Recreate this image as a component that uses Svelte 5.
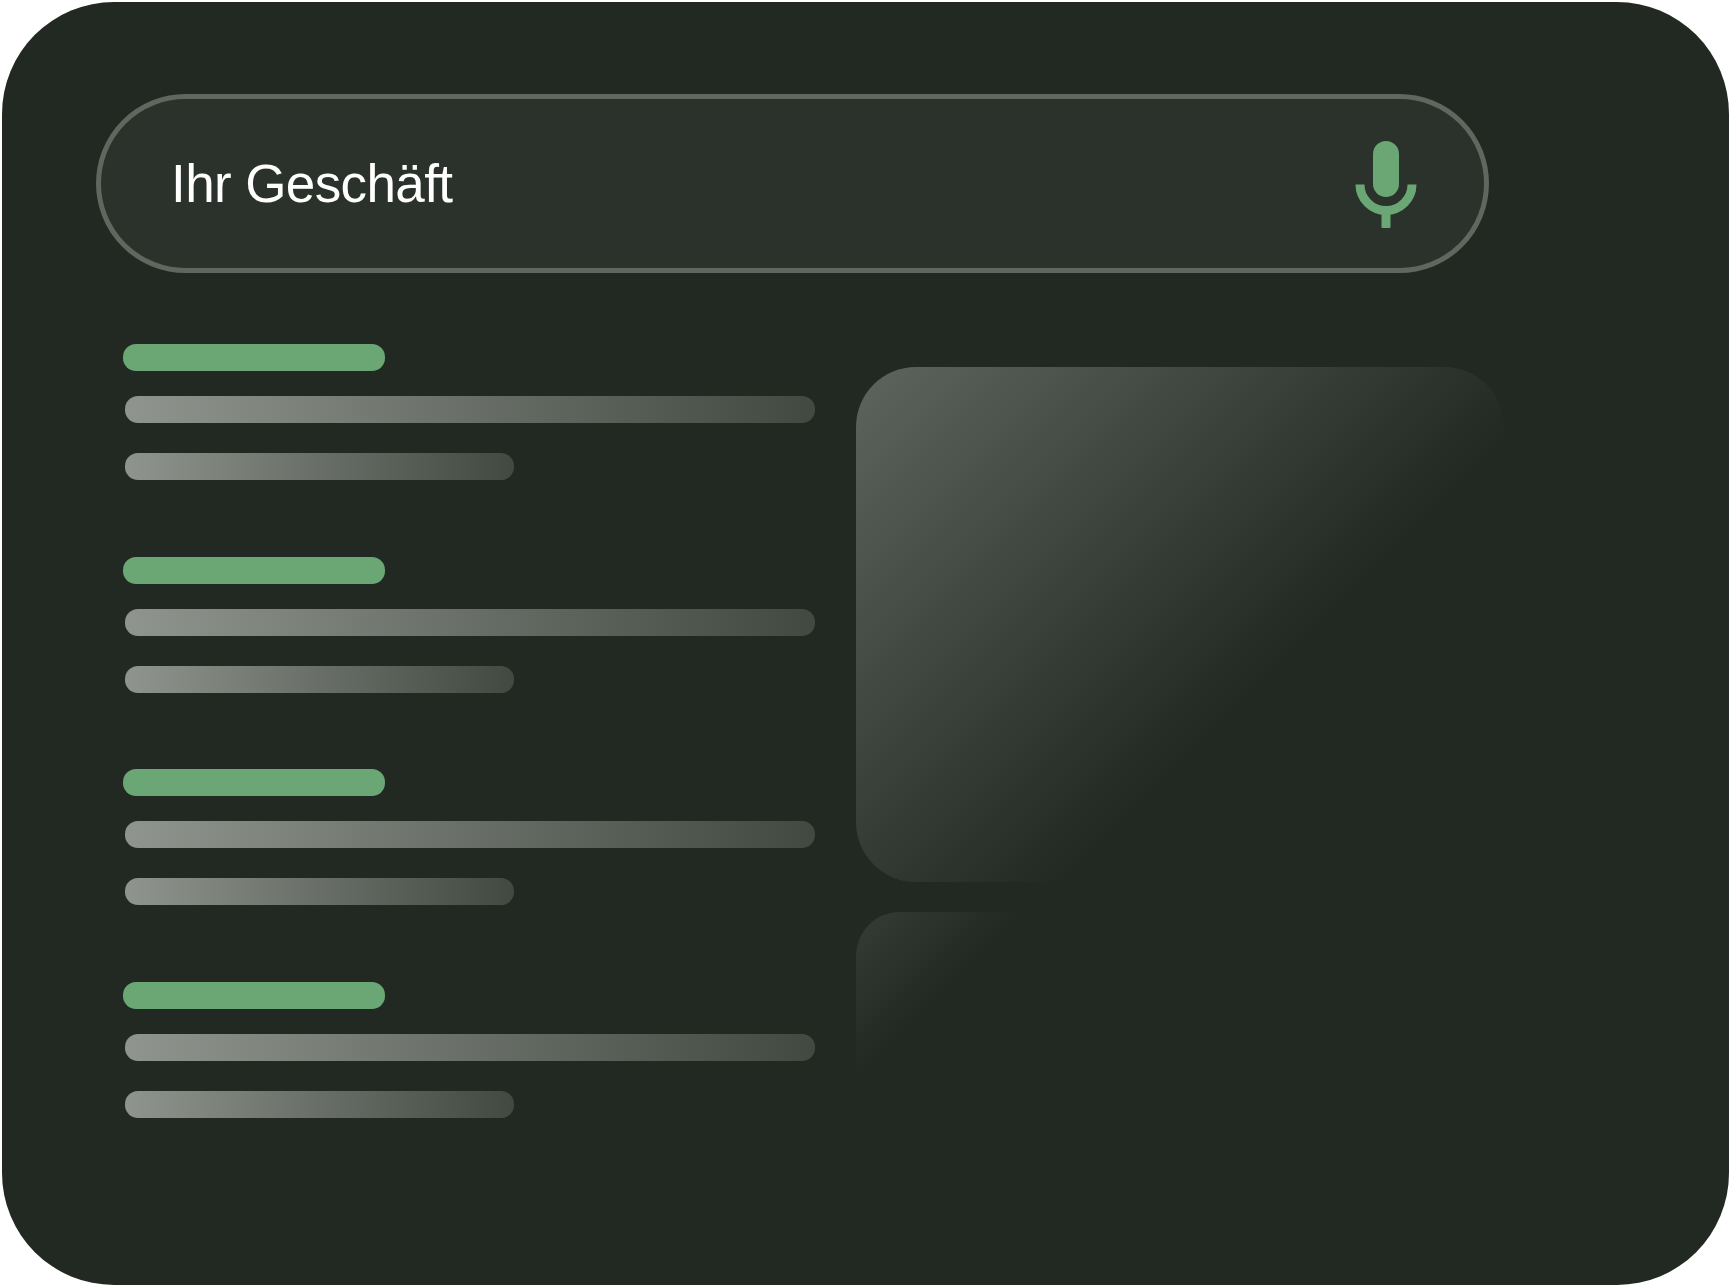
<script>
	let groups = [1, 2, 3, 4];
</script>

<div class="panel">
	<div class="search">
		<span class="query">Ihr Geschäft</span>
		<svg class="mic" width="62" height="88" viewBox="0 0 62 88" aria-hidden="true">
			<rect x="18" y="0" width="26" height="56" rx="13" fill="#6aa775" />
			<path d="M5 43.5a26 26 0 0 0 52 0" fill="none" stroke="#6aa775" stroke-width="9" />
			<rect x="26.5" y="72" width="9" height="15" rx="1" fill="#6aa775" />
		</svg>
	</div>

	<div class="main">
		<div class="list">
			{#each groups as g}
				<div class="group">
					<div class="bar title"></div>
					<div class="bar line long"></div>
					<div class="bar line short"></div>
				</div>
			{/each}
		</div>
		<div class="media">
			<div class="card big"></div>
			<div class="card small"></div>
		</div>
	</div>
</div>

<style>
	:global(body) {
		background: #fff;
	}
	.panel {
		box-sizing: border-box;
		width: 1727.5px;
		height: 1283.5px;
		margin: 1.5px;
		padding: 92.5px 0 0 94.5px;
		background: #222822;
		border-radius: 112px;
		overflow: hidden;
		font-family: "Liberation Sans", Arial, sans-serif;
	}
	.search {
		box-sizing: border-box;
		display: flex;
		align-items: center;
		justify-content: space-between;
		width: 1393px;
		height: 179px;
		padding: 0 67px 0 70px;
		background: #2b312b;
		border: 5px solid #5f675f;
		border-radius: 90px;
	}
	.query {
		color: #fff;
		font-size: 53px;
		line-height: 1;
		letter-spacing: -0.6px;
	}
	.mic {
		display: block;
		margin-top: 2px;
	}
	.main {
		display: flex;
		margin-top: 71px;
	}
	.list {
		display: flex;
		flex-direction: column;
		gap: 76.5px;
		width: 760px;
		padding-left: 27px;
		box-sizing: border-box;
	}
	.group {
		display: flex;
		flex-direction: column;
	}
	.bar {
		height: 27px;
		border-radius: 13px;
	}
	.title {
		width: 262px;
		background: #6aa775;
	}
	.line {
		margin-left: 2px;
		background: linear-gradient(90deg, #90948e 0%, #414941 100%);
	}
	.long {
		width: 690px;
		margin-top: 25px;
	}
	.short {
		width: 389px;
		margin-top: 30px;
	}
	.media {
		display: flex;
		flex-direction: column;
		gap: 30px;
		margin-top: 22.5px;
	}
	.card {
		width: 648px;
	}
	.big {
		height: 515px;
		border-radius: 60px;
		background: linear-gradient(135deg, #5e645e 0%, #222822 510px);
	}
	.small {
		height: 240px;
		border-radius: 44px 44px 0 0;
		background: linear-gradient(135deg, #363c36 0%, #222822 118px);
	}
</style>
